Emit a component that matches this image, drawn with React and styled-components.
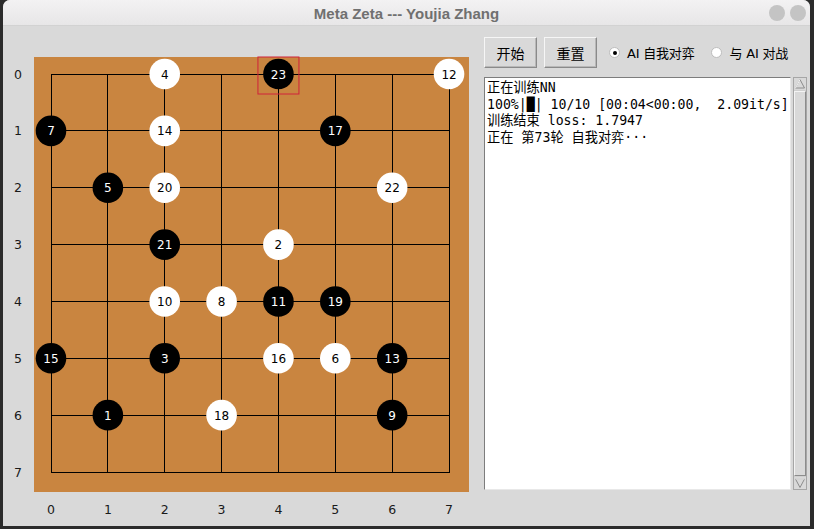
import styled, { createGlobalStyle } from "styled-components";

const GlobalStyle = createGlobalStyle`
  html, body {
    margin: 0;
    padding: 0;
    background: #2b2b2b;
  }
  body {
    width: 814px;
    height: 529px;
    overflow: hidden;
    font-family: "DejaVu Sans", "Noto Sans CJK SC", sans-serif;
  }
`;

const STEP = 56.86;
const X0 = 51;
const Y0 = 74;
const BOARD_TOP = 57;

const stones = [
  [2, 0, 4], [4, 0, 23], [7, 0, 12],
  [0, 1, 7], [2, 1, 14], [5, 1, 17],
  [1, 2, 5], [2, 2, 20], [6, 2, 22],
  [2, 3, 21], [4, 3, 2],
  [2, 4, 10], [3, 4, 8], [4, 4, 11], [5, 4, 19],
  [0, 5, 15], [2, 5, 3], [4, 5, 16], [5, 5, 6], [6, 5, 13],
  [1, 6, 1], [3, 6, 18], [6, 6, 9],
];

const lastMove = 23;

const logLines = [
  "正在训练NN",
  "100%|█| 10/10 [00:04<00:00,  2.09it/s]",
  "训练结束 loss: 1.7947",
  "正在 第73轮 自我对弈···",
];

const Window = styled.div`
  margin-left: 3px;
  width: 807px;
  height: 526px;
  display: flex;
  flex-direction: column;
  border-radius: 7px 7px 0 0;
  overflow: hidden;
  background: #d9d9d9;
`;

const TitleBar = styled.div`
  height: 26px;
  flex: none;
  position: relative;
  display: flex;
  align-items: center;
  justify-content: center;
  background: linear-gradient(#f3f2f3, #e7e6e7);
  border-bottom: 1px solid #d2d2d2;
  box-sizing: border-box;
`;

const Title = styled.span`
  font-family: "Liberation Sans", Arial, sans-serif;
  font-weight: bold;
  font-size: 15px;
  color: #707070;
  padding-top: 1px;
`;

const TitleButtons = styled.div`
  position: absolute;
  right: 4px;
  top: 5px;
  display: flex;
  gap: 5px;
`;

const TitleDot = styled.span`
  width: 16px;
  height: 16px;
  border-radius: 50%;
  background: #c4c4c4;
`;

const Body = styled.div`
  flex: 1;
  display: flex;
`;

const BoardSvg = styled.svg`
  flex: none;
  display: block;
`;

const SidePanel = styled.div`
  flex: 1;
  display: flex;
  flex-direction: column;
  padding: 11px 4px 0 3px;
  gap: 9px;
`;

const Controls = styled.div`
  display: flex;
  align-items: center;
  height: 31px;
`;

const Button = styled.button`
  width: 53px;
  height: 31px;
  margin-right: ${(p) => p.$gap}px;
  padding: 0;
  background: #d9d9d9;
  border: 1px solid;
  border-color: #f6f6f6 #8a8a8a #8a8a8a #f6f6f6;
  box-shadow: inset -1px -1px 0 #b8b8b8;
  font-family: "Noto Sans CJK SC", sans-serif;
  font-size: 14px;
  color: #000;
`;

const Radio = styled.label`
  display: flex;
  align-items: center;
  gap: 7px;
  margin-left: ${(p) => p.$offset}px;
  font-family: "DejaVu Sans", "Noto Sans CJK SC", sans-serif;
  font-size: 13px;
  letter-spacing: -0.2px;
  color: #000;
`;

const RadioMark = styled.span`
  width: 9px;
  height: 9px;
  border-radius: 50%;
  background: #fff;
  border: 1px solid #bdbdbd;
  display: flex;
  align-items: center;
  justify-content: center;
  &::after {
    content: "";
    width: 4px;
    height: 4px;
    border-radius: 50%;
    background: ${(p) => (p.$on ? "#000" : "transparent")};
  }
`;

const LogRow = styled.div`
  display: flex;
  height: 413px;
`;

const LogBox = styled.div`
  width: 307px;
  background: #fff;
  border: 1px solid;
  border-color: #7d7d7d #e8e8e8 #e8e8e8 #7d7d7d;
  box-sizing: border-box;
  padding: 2px 2px;
  font-family: "DejaVu Sans Mono", "Noto Sans CJK SC", monospace;
  font-size: 13.2px;
  line-height: 16.6px;
  color: #000;
  white-space: pre;
  overflow: hidden;
`;

const Scrollbar = styled.div`
  width: 14px;
  margin-left: 2px;
  display: flex;
  flex-direction: column;
  border: 1px solid #a6a6a6;
  box-sizing: border-box;
  background: #cfcfcf;
`;

const Arrow = styled.svg`
  display: block;
  flex: none;
`;

const Thumb = styled.div`
  flex: 1;
  margin: 1px 0;
  background: #d9d9d9;
  border: 1px solid;
  border-color: #f4f4f4 #8c8c8c #8c8c8c #f4f4f4;
`;

const Board = () => {
  const lines = [];
  for (let i = 0; i < 8; i++) {
    const p = i * STEP;
    lines.push(
      <line key={`h${i}`} x1={X0} y1={Y0 + p} x2={X0 + 7 * STEP + 1} y2={Y0 + p} />,
      <line key={`v${i}`} x1={X0 + p} y1={Y0} x2={X0 + p} y2={Y0 + 7 * STEP + 1} />
    );
  }
  return (
    <BoardSvg width="478" height="500" viewBox="3 26 478 500">
      <rect x="34" y={BOARD_TOP} width="435" height="435" fill="#c98540" />
      <g stroke="#000" strokeWidth="1" shapeRendering="crispEdges">
        {lines}
      </g>
      <g fontFamily="DejaVu Sans, sans-serif" fontSize="12.5" fill="#1a1a1a" textAnchor="middle">
        {Array.from({ length: 8 }, (_, i) => (
          <text key={`r${i}`} x="18" y={Y0 + i * STEP + 4.5}>{i}</text>
        ))}
        {Array.from({ length: 8 }, (_, i) => (
          <text key={`c${i}`} x={X0 + i * STEP} y="514">{i}</text>
        ))}
      </g>
      {stones.map(([c, r, n]) => {
        const cx = X0 + c * STEP;
        const cy = Y0 + r * STEP;
        const black = n % 2 === 1;
        const top = Math.max(cy - 20, BOARD_TOP);
        return (
          <g key={n}>
            <circle cx={cx} cy={cy} r="15.3" fill={black ? "#000" : "#fff"} />
            <text
              x={cx}
              y={cy + 4.5}
              textAnchor="middle"
              fontFamily="DejaVu Sans, sans-serif"
              fontSize="12"
              fill={black ? "#fff" : "#000"}
            >
              {n}
            </text>
            {n === lastMove && (
              <rect
                x={cx - 20.5}
                y={top}
                width="41"
                height={cy + 20 - top}
                fill="none"
                stroke="#d0223a"
                strokeWidth="1"
              />
            )}
          </g>
        );
      })}
    </BoardSvg>
  );
};

const ArrowIcon = ({ down }) => (
  <Arrow width="12" height="12" viewBox="0 0 12 12">
    <rect x="0" y="0" width="12" height="12" fill="#d9d9d9" />
    {down ? (
      <>
        <polygon points="1.5,2 10.5,2 6,10.5" fill="#d9d9d9" stroke="#8c8c8c" strokeWidth="1" />
        <polyline points="1.5,2 10.5,2" stroke="#f6f6f6" fill="none" />
      </>
    ) : (
      <>
        <polygon points="6,1.5 10.5,10 1.5,10" fill="#d9d9d9" stroke="#8c8c8c" strokeWidth="1" />
        <polyline points="1.5,10 6,1.5" stroke="#f6f6f6" fill="none" />
      </>
    )}
  </Arrow>
);

export default function App() {
  return (
    <>
      <GlobalStyle />
      <Window>
        <TitleBar>
          <Title>Meta Zeta --- Youjia Zhang</Title>
          <TitleButtons>
            <TitleDot />
            <TitleDot />
          </TitleButtons>
        </TitleBar>
        <Body>
          <Board />
          <SidePanel>
            <Controls>
              <Button $gap={7}>开始</Button>
              <Button $gap={0}>重置</Button>
              <Radio $offset={12}>
                <RadioMark $on />
                AI 自我对弈
              </Radio>
              <Radio $offset={17}>
                <RadioMark />
                与 AI 对战
              </Radio>
            </Controls>
            <LogRow>
              <LogBox>{logLines.join("\n")}</LogBox>
              <Scrollbar>
                <ArrowIcon />
                <Thumb />
                <ArrowIcon down />
              </Scrollbar>
            </LogRow>
          </SidePanel>
        </Body>
      </Window>
    </>
  );
}
